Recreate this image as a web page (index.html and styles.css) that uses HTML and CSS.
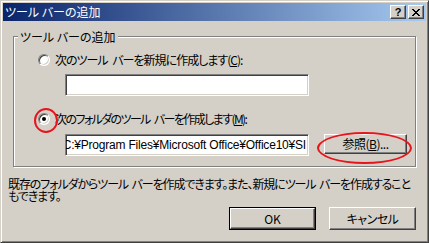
FILE: index.html
```html
<!DOCTYPE html>
<html lang="ja">
<head>
<meta charset="utf-8">
<title>ツール バーの追加</title>
<link rel="stylesheet" href="styles.css">
</head>
<body>
<div class="window">
  <div class="titlebar">
    <span class="title">ツール バーの追加</span>
    <div class="tbtns">
      <span class="tbtn help">?</span>
      <span class="tbtn close"><svg width="8" height="7" viewBox="0 0 8 7"><path d="M0 0h2v1h-2zM6 0h2v1h-2zM1 1h2v1h-2zM5 1h2v1h-2zM2 2h4v1h-4zM3 3h2v1h-2zM2 4h4v1h-4zM1 5h2v1h-2zM5 5h2v1h-2zM0 6h2v1h-2zM6 6h2v1h-2z" fill="#000"/></svg></span>
    </div>
  </div>
  <div class="body">
    <div class="group">
      <span class="group-title">ツール バーの追加</span>
      <div class="opt opt1"><span class="radio"></span><span class="lbl">次のツール バーを新規に作成します(<u>C</u>):</span></div>
      <div class="edit edit1"></div>
      <div class="opt opt2"><span class="radio checked"><span class="dot"></span></span><span class="lbl lbl2">次のフォルダのツール バーを作成します(<u>M</u>):</span></div>
      <div class="path-row">
        <div class="edit edit2"><span class="path">C:¥Program Files¥Microsoft Office¥Office10¥SI</span></div>
        <div class="btn browse">参照(<u>B</u>)...</div>
      </div>
    </div>
    <p class="desc">既存のフォルダからツール バーを作成できます。また、新規にツール バーを作成すること<br>もできます。</p>
    <div class="actions">
      <div class="default-frame"><div class="btn ok">OK</div></div>
      <div class="btn cancel">キャンセル</div>
    </div>
  </div>
  <span class="mark mark-radio"></span>
  <span class="mark mark-browse"></span>
</div>
</body>
</html>
```
FILE: styles.css
```css
* { box-sizing: border-box; }
html, body { margin: 0; padding: 0; background: #d4d0c8; }
body {
  font-family: "Noto Sans CJK JP", "Liberation Sans", sans-serif;
  font-size: 12px;
  line-height: 12px;
  color: #000;
  font-feature-settings: "palt";
}
.window {
  position: relative;
  width: 429px;
  height: 243px;
  background: #d4d0c8;
  border: 1px solid;
  border-color: #d4d0c8 #404040 #404040 #d4d0c8;
  box-shadow: inset 1px 1px #fff, inset -1px -1px #808080;
  padding: 2px;
  overflow: hidden;
}
.titlebar {
  height: 18px;
  display: flex;
  align-items: center;
  justify-content: space-between;
  background: linear-gradient(to right, #0a246a, #a6caf0);
  padding: 0 2px 0 2px;
}
.title { color: #fff; font-size: 12px; line-height: 14px; }
.tbtns { display: flex; gap: 2px; }
.tbtn {
  width: 16px;
  height: 14px;
  background: #d4d0c8;
  border: 1px solid;
  border-color: #fff #404040 #404040 #fff;
  box-shadow: inset -1px -1px #808080;
  display: flex;
  align-items: center;
  justify-content: center;
}
.help { font-family: "Liberation Sans", sans-serif; font-weight: bold; font-size: 11px; line-height: 11px; }
.body { display: flex; flex-direction: column; }
.group {
  position: relative;
  margin: 15px 0 0 10px;
  width: 403px;
  height: 131px;
  border: 1px solid #808080;
  box-shadow: inset 1px 1px #fff, 1px 1px #fff;
  display: flex;
  flex-direction: column;
}
.group-title {
  position: absolute;
  top: -7px;
  left: 4px;
  padding: 0 2px;
  background: #d4d0c8;
  line-height: 13px;
}
.opt { display: flex; align-items: center; height: 13px; padding-left: 24px; }
.opt1 { margin-top: 16px; }
.opt2 { margin-top: 16px; }
.radio {
  position: relative;
  flex: none;
  width: 12px;
  height: 12px;
  border-radius: 50%;
  background: #fff;
  border: 1px solid;
  border-color: #808080 #fff #fff #808080;
  box-shadow: inset 1px 1px #404040, inset -1px -1px #d4d0c8;
  margin-right: 5px;
  display: flex;
  align-items: center;
  justify-content: center;
}
.dot { width: 4px; height: 4px; border-radius: 50%; background: #000; }
.lbl { white-space: nowrap; letter-spacing: -1px; word-spacing: 3px; }
.lbl2 { letter-spacing: -1.6px; }
.edit {
  width: 244px;
  height: 22px;
  background: #fff;
  border: 1px solid;
  border-color: #808080 #fff #fff #808080;
  box-shadow: inset 1px 1px #404040, inset -1px -1px #d4d0c8;
}
.edit1 { margin: 8px 0 0 51px; }
.path-row { display: flex; align-items: flex-start; margin: 9px 0 0 51px; gap: 15px; }
.edit2 {
  flex: none;
  display: flex;
  align-items: center;
  justify-content: flex-end;
  overflow: hidden;
  padding: 0 2px;
}
.path { white-space: nowrap; font-family: "Liberation Sans", "Noto Sans CJK JP", sans-serif; font-size: 12px; letter-spacing: -0.2px; }
.btn {
  display: flex;
  align-items: center;
  justify-content: center;
  background: #d4d0c8;
  border: 1px solid;
  border-color: #fff #404040 #404040 #fff;
  box-shadow: inset -1px -1px #808080, inset 1px 1px #d4d0c8;
  white-space: nowrap;
}
.browse { width: 83px; height: 20px; letter-spacing: -0.5px; }
.desc { margin: 11px 0 0 5px; line-height: 12px; white-space: nowrap; letter-spacing: -1.1px; word-spacing: 2px; }
.actions { display: flex; justify-content: flex-end; gap: 13px; margin: 5px 10px 0 0; }
.default-frame { border: 1px solid #000; width: 87px; height: 23px; }
.ok { width: 85px; height: 21px; }
.cancel { width: 87px; height: 23px; letter-spacing: -0.5px; }
.mark {
  position: absolute;
  border: 2px solid #e8141c;
  border-radius: 50%;
}
.mark-radio { left: 33px; top: 107px; width: 24px; height: 25px; }
.mark-browse { left: 316px; top: 131px; width: 95px; height: 32px; }
```
